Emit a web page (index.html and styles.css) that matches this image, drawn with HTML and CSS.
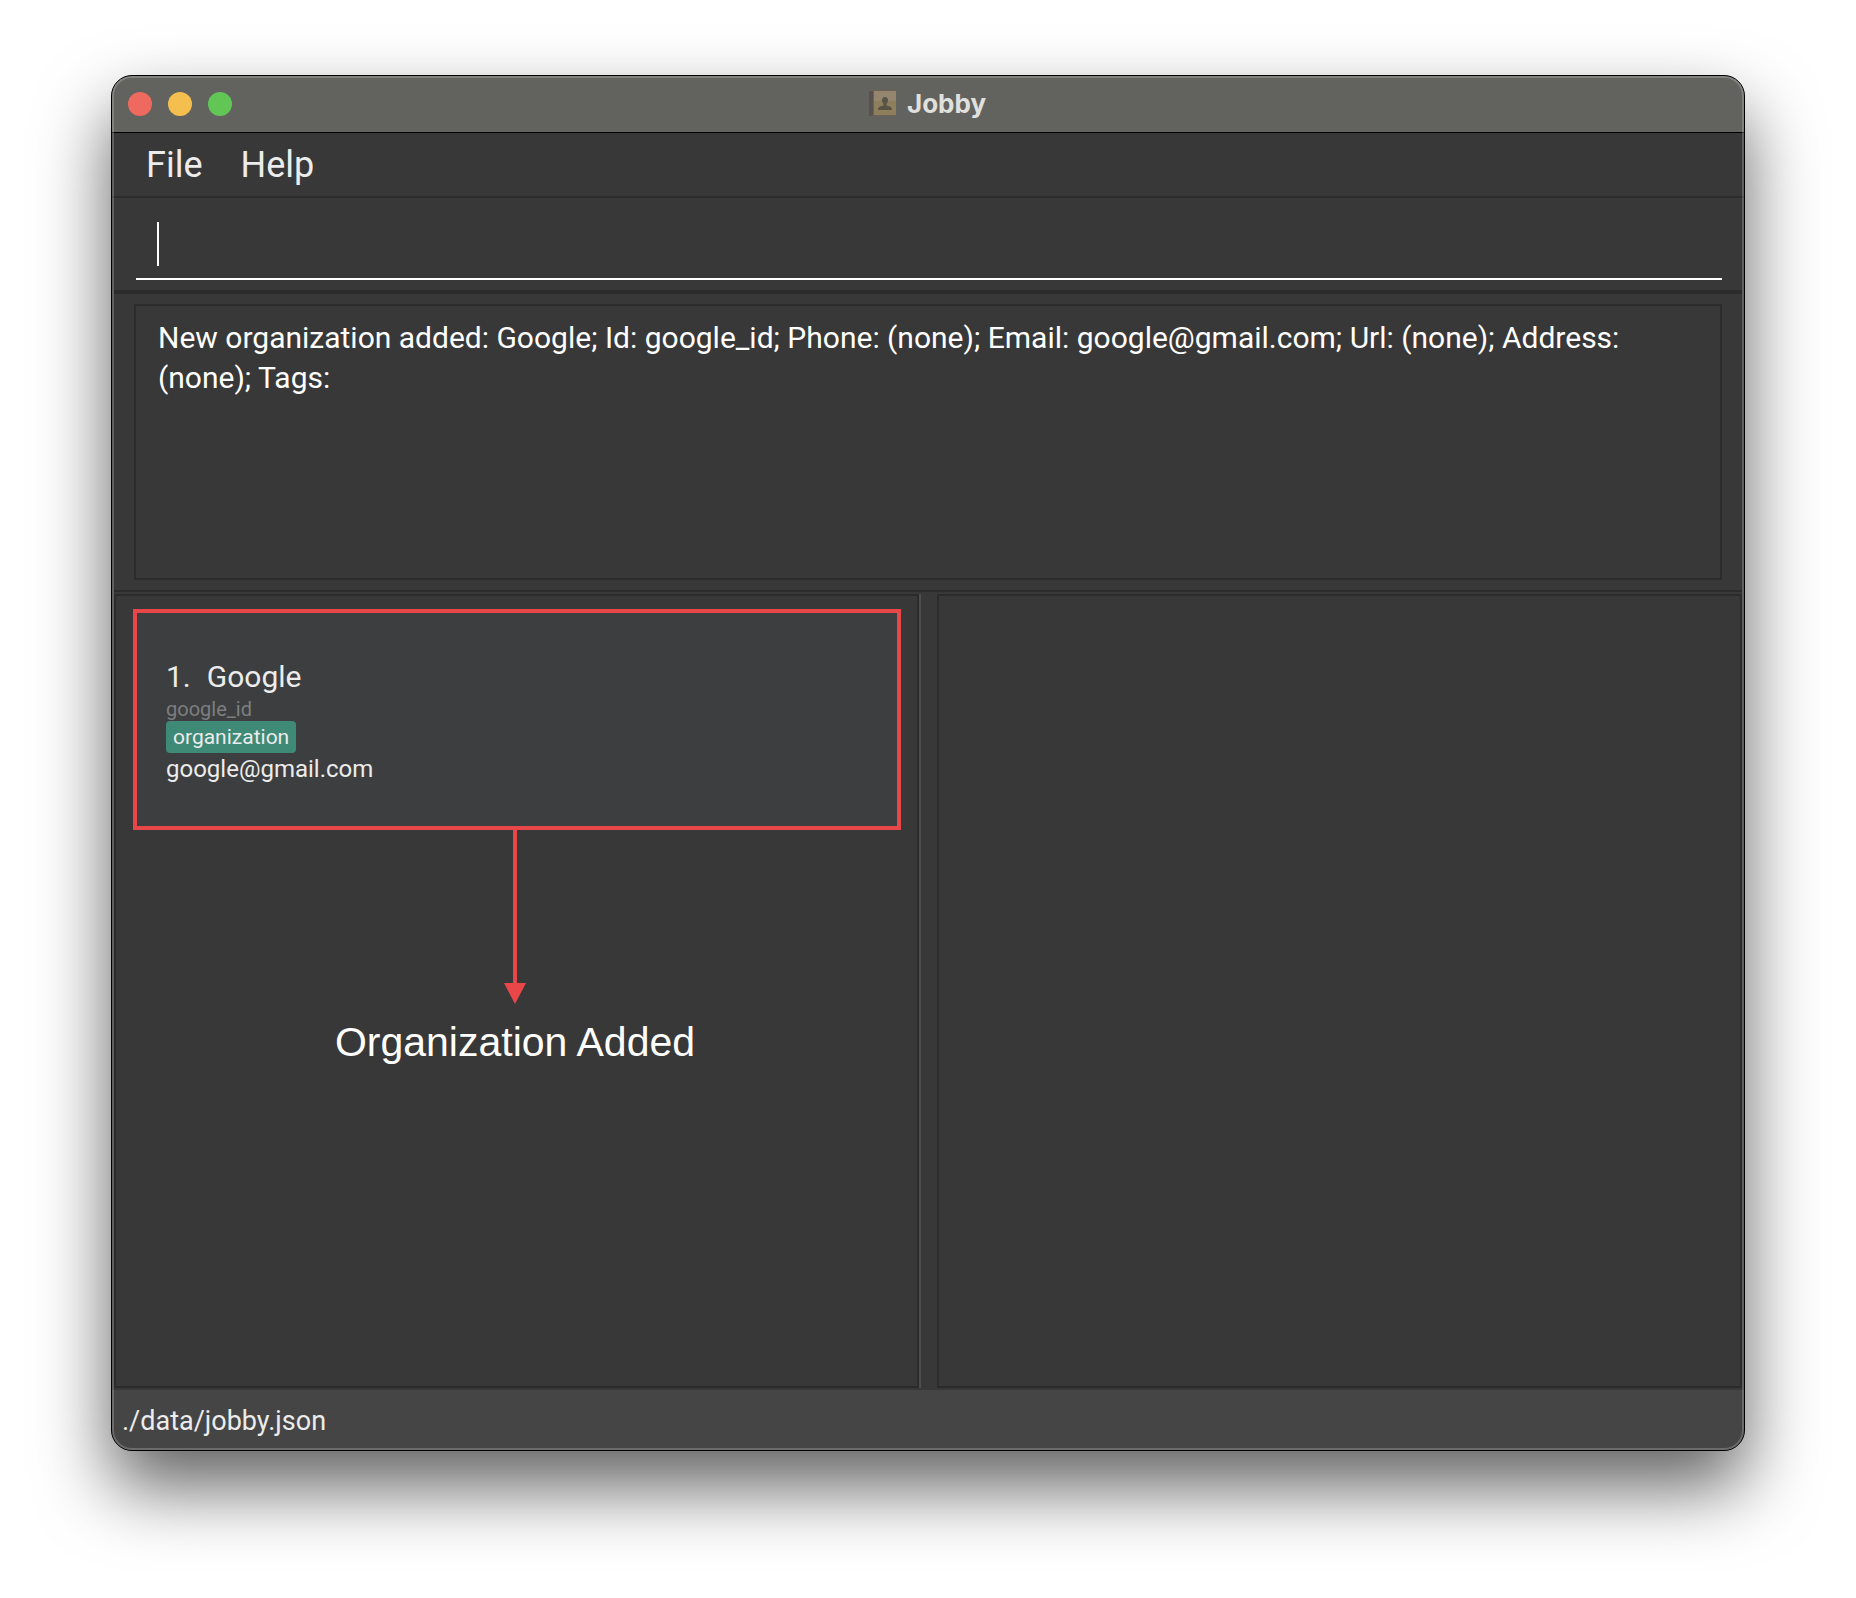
FILE: index.html
```html
<!DOCTYPE html>
<html lang="en">
<head>
<meta charset="utf-8">
<title>Jobby</title>
<link rel="stylesheet" href="styles.css">
</head>
<body>
<main class="window">
  <header class="titlebar">
    <div class="lights">
      <button class="light close" aria-label="Close"></button>
      <button class="light minimize" aria-label="Minimize"></button>
      <button class="light zoom" aria-label="Zoom"></button>
    </div>
    <h1 class="title">
      <svg class="book" viewBox="0 0 28 28" aria-hidden="true">
        <rect x="0" y="0" width="27" height="26" rx="2" fill="#6d6354"/>
        <rect x="0" y="1" width="4" height="25" rx="1" fill="#565250"/>
        <rect x="5" y="1" width="22" height="24" fill="#8f7e5c"/>
        <rect x="5" y="1" width="22" height="10" fill="#94866e"/>
        <path d="M16 7c2 0 3.300 1.400 3 3.800-.2 1.500-.9 2.300-1.500 3v1.800c2 .9 5.500.6 5.500 4.400H9c0-3.800 3.500-3.500 5.500-4.400v-1.800c-.6-.7-1.300-1.500-1.500-3C12.700 8.400 14 7 16 7z" fill="#575346"/>
      </svg>
      <span>Jobby</span>
    </h1>
  </header>
  <nav class="menubar">
    <button class="menu">File</button>
    <button class="menu">Help</button>
  </nav>
  <form class="command">
    <input class="command-input" type="text" aria-label="Command">
    <span class="caret"></span>
  </form>
  <section class="result">
    <textarea class="result-text" aria-label="Result" readonly>New organization added: Google; Id: google_id; Phone: (none); Email: google@gmail.com; Url: (none); Address: (none); Tags:</textarea>
  </section>
  <section class="split">
    <div class="pane list">
      <article class="card">
        <h2 class="name"><span>1.</span><span>Google</span></h2>
        <p class="id">google_id</p>
        <p class="tag">organization</p>
        <p class="email">google@gmail.com</p>
      </article>
      <div class="note">
        <svg class="arrow" viewBox="0 0 22 174" aria-hidden="true">
          <path d="M9 0h4v153h9l-11 21L0 153h9z" fill="#e9464a"/>
        </svg>
        <p class="note-text">Organization Added</p>
      </div>
    </div>
    <div class="divider"></div>
    <div class="pane"></div>
  </section>
  <footer class="status">./data/jobby.json</footer>
</main>
</body>
</html>
```
FILE: styles.css
```css
* {
  box-sizing: border-box;
}

body {
  margin: 0;
  min-height: 100vh;
  padding: 75px 111px 147px;
  display: flex;
  flex-direction: column;
  background: #fff;
  font-family: Roboto, Inter, sans-serif;
  color: #ececec;
}

h1, h2, p {
  margin: 0;
  font-weight: 400;
}

button {
  border: 0;
  padding: 0;
  background: none;
  font: inherit;
  color: inherit;
}

.window {
  flex: 1;
  display: flex;
  flex-direction: column;
  position: relative;
  border: 1px solid #000;
  border-radius: 21px;
  overflow: hidden;
  background: #383838;
  box-shadow: 0 36px 72px rgba(0, 0, 0, 0.62);
}

/* light rim inside the window edge */
.window::after {
  content: "";
  position: absolute;
  inset: 0;
  border: 2px solid rgba(255, 255, 255, 0.2);
  border-radius: 20px;
  pointer-events: none;
}

.titlebar {
  display: grid;
  grid-template-columns: 1fr auto 1fr;
  align-items: center;
  height: 57px;
  padding: 0 17px 0 16px;
  background: #62625f;
  border-bottom: 1px solid #000;
}

.lights {
  display: flex;
  gap: 16px;
}

.light {
  width: 24px;
  height: 24px;
  border-radius: 50%;
}

.close { background: #ee6a5f; }
.minimize { background: #f5bf4f; }
.zoom { background: #62c656; }

.title {
  display: flex;
  align-items: center;
  gap: 10px;
  font-family: Inter, Roboto, sans-serif;
  font-size: 26px;
  font-weight: 700;
  line-height: 32px;
  color: #e0e0dd;
}

.book {
  width: 28px;
  height: 28px;
}

.menubar {
  display: flex;
  gap: 38px;
  height: 65px;
  padding: 0 34px;
  border-bottom: 2px solid #2b2b2b;
  font-size: 36px;
  line-height: 62px;
}

.command {
  position: relative;
  padding: 10px 20px 10px 22px;
  margin: 0 2px;
  border-bottom: 4px solid #2b2b2b;
}

.command-input {
  display: block;
  width: 100%;
  height: 72px;
  padding: 0 20px;
  border: 0;
  border-bottom: 2px solid #fff;
  background: none;
  color: #fff;
  font: 30px/40px Roboto, Inter, sans-serif;
  outline: 0;
}

.caret {
  position: absolute;
  left: 43px;
  top: 24px;
  width: 2px;
  height: 44px;
  background: #fff;
}

.result {
  margin: 0 2px;
  padding: 10px 20px;
  border-bottom: 2px solid #2b2b2b;
}

.result-text {
  display: block;
  width: 100%;
  height: 276px;
  padding: 12px 22px;
  border: 2px solid #2b2b2b;
  background: none;
  color: #fff;
  font: 30px/40px Roboto, Inter, sans-serif;
  resize: none;
  outline: 0;
}

.split {
  flex: 1;
  display: grid;
  grid-template-columns: 1fr 18px 1fr;
  padding: 2px;
}

.pane {
  border: 2px solid #2b2b2b;
}

.list {
  padding: 13px 16px 13px 17px;
}

.divider {
  border-left: 2px solid #4d4d4d;
}

.card {
  display: flex;
  flex-direction: column;
  align-items: flex-start;
  padding: 44px 29px 40px;
  border: 4px solid #e9464a;
  background: #3c3e3f;
}

.name {
  display: flex;
  gap: 16px;
  font-size: 30px;
  line-height: 40px;
}

.id {
  font-size: 20px;
  line-height: 24px;
  color: #7d7e7f;
}

.tag {
  padding: 0 7px;
  border-radius: 4px;
  background: #3e8a76;
  font-size: 21px;
  line-height: 32px;
}

.email {
  font-size: 24px;
  line-height: 33px;
}

.note {
  display: flex;
  flex-direction: column;
  align-items: center;
  padding-right: 4px;
}

.arrow {
  width: 22px;
  height: 174px;
}

.note-text {
  margin-top: 16px;
  font: 41px/44px "Liberation Sans", Arial, sans-serif;
  color: #fff;
}

.status {
  padding: 2px 10px 0;
  background: #454545;
  font-size: 27px;
  line-height: 58px;
}
```
